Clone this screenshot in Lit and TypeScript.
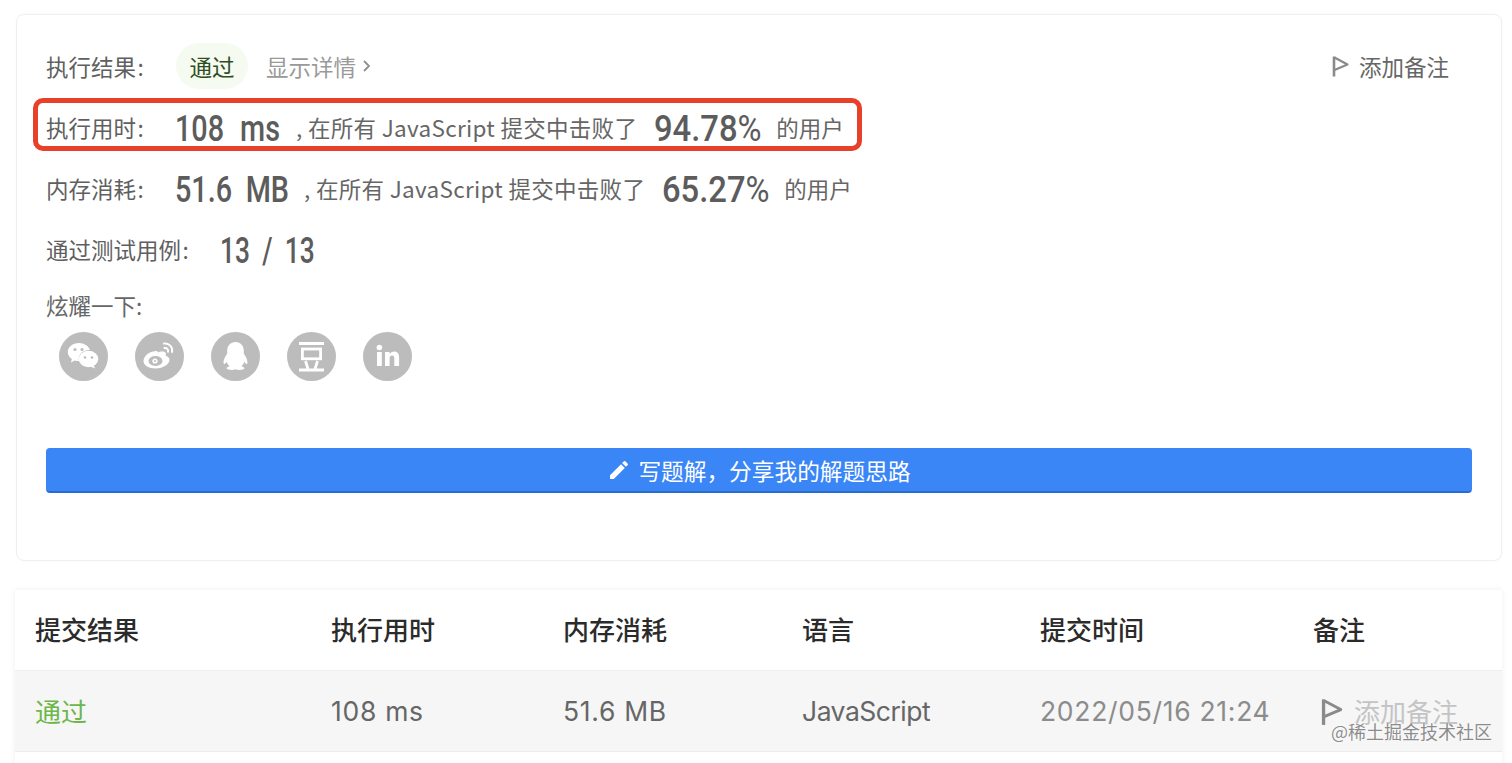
import { LitElement, html, css, svg } from "lit";
import { customElement } from "lit/decorators.js";

const flag = (cls: string) => html`<svg class=${cls} viewBox="0 0 18 22" fill="none"><path d="M2 1.5V21.5" stroke="currentColor" stroke-width="2.6"/><path d="M2.5 2.5L15.5 9.5L2.5 15" stroke="currentColor" stroke-width="2.2" stroke-linejoin="round"/></svg>`;

const wechat = svg`
  <path d="M20 11c-6.4 0-11.200 4-11.200 9.100 0 2.900 1.600 5.300 4.100 7l-1 3.300 3.800-2c1.300.4 2.800.6 4.300.6-.2-.8-.3-1.400-.3-2.100 0-5 4.600-8.900 10.500-8.900h.8C29.600 13.900 25.200 11 20 11z" fill="#fff"/>
  <ellipse cx="29.500" cy="27" rx="9.800" ry="8.200" fill="#fff"/>
  <path d="M34 33l2.500 3.500-5.500-2z" fill="#fff"/>
  <circle cx="16" cy="17.500" r="1.500" fill="#bcbcbc"/><circle cx="23" cy="17.500" r="1.500" fill="#bcbcbc"/>
  <circle cx="26" cy="25.500" r="1.300" fill="#bcbcbc"/><circle cx="33" cy="25.500" r="1.300" fill="#bcbcbc"/>`;
const weibo = svg`
  <path d="M21 19c-7 .6-12.500 5-12.500 10 0 4.500 5.300 7.400 12 7.400 7.800 0 14-4 14-8.600 0-2.800-3-3.800-4-4.100 1-2.400.4-4.200-3.100-4.300-1.900-.1-3.800.6-4.400 1-.5-1.500-1.200-1.500-2-1.400z" fill="#fff"/>
  <ellipse cx="20.500" cy="29" rx="7" ry="5" fill="#bcbcbc"/>
  <circle cx="20" cy="29" r="2.600" fill="#fff"/><circle cx="20" cy="29" r="1" fill="#bcbcbc"/>
  <path d="M29 11.500c5-.8 9 3.500 8 8.500M29.500 16c2.400-.4 4 1.500 3.500 3.800" stroke="#fff" stroke-width="2" fill="none" stroke-linecap="round"/>`;
const qq = svg`
  <path d="M24.500 10c-5 0-8.300 3.700-8.300 8.500v3.200c-2 2.600-4.300 7-3.500 9.800.6 1.400 2.200-.3 3-1.700.6 1.800 1.500 3.300 2.800 4.400-1.700.5-2.900 1.300-2.900 2.100 0 1 3 1.700 5.500 1.700 1.400 0 2.500-.3 3.400-.8.900.5 2 .8 3.400.8 2.500 0 5.500-.7 5.500-1.700 0-.8-1.200-1.600-2.900-2.100 1.300-1.100 2.200-2.600 2.800-4.400.8 1.400 2.400 3.100 3 1.700.8-2.800-1.500-7.200-3.500-9.800v-3.200c0-4.800-3.300-8.500-8.300-8.500z" fill="#fff"/>`;
const douban = svg`
  <path d="M12 11.500h25M12 38h25" stroke="#fff" stroke-width="2.800"/>
  <rect x="15.400" y="17" width="18.200" height="9.800" fill="none" stroke="#fff" stroke-width="2.800"/>
  <path d="M18.500 29l2.500 8M30.500 29l-2.500 8" stroke="#fff" stroke-width="2.800"/>`;
const linkedin = svg`
  <rect x="14" y="20" width="4.800" height="14" fill="#fff"/><circle cx="16.400" cy="15.500" r="2.800" fill="#fff"/>
  <path d="M22 20h4.600v2c1-1.500 2.500-2.400 4.500-2.400 3.600 0 5 2.300 5 6V34h-4.800v-7.500c0-2-.6-3.100-2.200-3.100-1.700 0-2.500 1.200-2.500 3.100V34H22z" fill="#fff"/>`;

@customElement("app-root")
export class AppRoot extends LitElement {
  static styles = css`
    :host {
      display: block;
      width: 1512px;
      height: 763px;
      overflow: hidden;
      position: relative;
      background: #fff;
      font-family: "Noto Sans CJK SC", "Noto Sans", sans-serif;
      color: #666;
      font-size: 22.5px;
    }
    .card {
      margin: 14px 10px 0 16px;
      border: 1px solid #efefef;
      border-radius: 8px;
      padding: 22px 29px 67px;
      box-shadow: 0 0 3px rgba(0, 0, 0, 0.03);
    }
    .row {
      display: flex;
      align-items: center;
      box-sizing: border-box;
      height: 61px;
      padding-bottom: 4px;
      white-space: nowrap;
      position: relative;
    }
    .label { width: 129px; flex: none; color: #5f5f5f; }
    .label.wide { width: 174px; }
    .pill {
      width: 72px;
      height: 46px;
      margin-left: 1px;
      border-radius: 23px;
      background: #f6fbf2;
      color: #2f4f1e;
      display: flex;
      align-items: center;
      justify-content: center;
    }
    .details { margin-left: 18px; color: #9a9a9a; display: flex; align-items: center; gap: 6px; }
    .chev { width: 9px; height: 14px; }
    .note { margin-left: auto; margin-right: 23px; display: flex; align-items: center; gap: 9px; color: #666; }
    .note svg { width: 18px; height: 22px; color: #8a8a8a; }
    .big {
      display: inline-block;
      flex: none;
      margin-top: 4px;
      font-family: "Roboto", sans-serif;
      font-size: 36px;
      line-height: 40px;
      font-weight: 500;
      color: #5c5c5c;
      white-space: nowrap;
      transform-origin: left center;
      transform: scaleX(0.8);
      word-spacing: 3px;
    }
    .w108 { width: 105px; word-spacing: 11px; }
    .w516 { width: 113px; word-spacing: 8px; }
    .w13 { width: 93px; word-spacing: 8px; transform: scaleX(0.73); }
    .wpct { width: 106px; transform: scaleX(0.91); }
    .txt { font-size: 22.5px; margin-left: 16px; color: #666; letter-spacing: 0.3px; }
    .pct { margin-left: 17px; }
    .pct i { font-style: normal; font-weight: 400; }
    .end { font-size: 22.5px; margin-left: 16px; color: #666; }
    .redbox {
      position: absolute;
      left: -13px;
      top: 0;
      width: 829px;
      height: 53px;
      box-sizing: border-box;
      border: 5px solid #e8412b;
      border-radius: 10px;
    }
    .share { height: 52px; }
    .icons { display: flex; gap: 27px; padding-left: 13px; margin-top: -1px; }
    .icons svg { width: 49px; height: 49px; display: block; }
    .btn {
      margin-top: 67px;
      height: 45px;
      box-sizing: border-box;
      background: #3b86f6;
      border: 1px solid #3b86f6;
      border-bottom: 2px solid #2a6ccc;
      border-radius: 4px;
      display: flex;
      align-items: center;
      justify-content: center;
      gap: 7px;
      color: #fff;
      font-size: 22.7px;
    }
    .btn svg { width: 24px; height: 24px; }
    .table {
      position: relative;
      margin: 29px 10px 0 15px;
      box-shadow: 0 0 6px rgba(0, 0, 0, 0.07);
    }
    .tr {
      display: grid;
      grid-template-columns: 296px 232px 239px 238px 273px 1fr;
      padding-left: 20px;
      box-sizing: border-box;
      height: 81px;
      align-items: center;
      white-space: nowrap;
      font-size: 26px;
    }
    .head { font-weight: 500; color: #2b2b2b; height: 81px; padding-bottom: 4px; border-bottom: 1px solid #eee; }
    .body { background: #f6f6f6; color: #666; border-bottom: 1px solid #ececec; }
    .cjk { margin-top: -2px; }
    .num { font-family: "Inter", sans-serif; font-size: 26.5px; letter-spacing: 0.7px; }
    .num.lang { letter-spacing: -0.5px; }
    .pass { color: #6cb64a; }
    .time { color: #8c8c8c; }
    .add { display: flex; align-items: center; gap: 10px; padding-left: 8px; color: #c4c4c4; margin-top: -2px; }
    .add svg { width: 23px; height: 29px; color: #8a8a8a; margin-top: 2px; }
    .filler { height: 30px; background: #fff; }
    .mark {
      position: absolute;
      right: 20px;
      bottom: 19px;
      font-size: 18px;
      color: rgba(120, 120, 120, 0.85);
      text-shadow: 0 0 2px rgba(255, 255, 255, 0.6);
      white-space: nowrap;
    }
  `;

  render() {
    return html`
      <div class="card">
        <div class="row">
          <span class="label">执行结果\u200a:</span>
          <span class="pill">通过</span>
          <span class="details">显示详情
            <svg class="chev" viewBox="0 0 9 14" fill="none"><path d="M2 2l5 5-5 5" stroke="#8f8f8f" stroke-width="1.800"/></svg>
          </span>
          <span class="note">${flag("")}添加备注</span>
        </div>
        <div class="row">
          <span class="label">执行用时\u200a:</span>
          <span class="big w108">108 ms</span>
          <span class="txt">, 在所有 JavaScript 提交中击败了</span>
          <span class="big wpct pct">94.78<i>%</i></span>
          <span class="end">的用户</span>
          <div class="redbox"></div>
        </div>
        <div class="row">
          <span class="label">内存消耗\u200a:</span>
          <span class="big w516">51.6 MB</span>
          <span class="txt">, 在所有 JavaScript 提交中击败了</span>
          <span class="big wpct pct">65.27<i>%</i></span>
          <span class="end">的用户</span>
        </div>
        <div class="row">
          <span class="label wide">通过测试用例\u200a:</span>
          <span class="big w13">13 / 13</span>
        </div>
        <div class="row share"><span>炫耀一下:</span></div>
        <div class="icons">
          ${[wechat, weibo, qq, douban, linkedin].map(
            (i) => html`<svg viewBox="0 0 49 49"><circle cx="24.5" cy="24.5" r="24.5" fill="#bcbcbc"/>${i}</svg>`
          )}
        </div>
        <div class="btn">
          <svg viewBox="0 0 24 24"><path fill="#fff" d="M3 17.250V21h3.750L17.810 9.940l-3.750-3.750L3 17.250zM20.710 7.040a1 1 0 0 0 0-1.410l-2.340-2.340a1 1 0 0 0-1.410 0l-1.830 1.830 3.750 3.750 1.830-1.830z"/></svg>
          <span>写题解，分享我的解题思路</span>
        </div>
      </div>
      <div class="table">
        <div class="tr head">
          <span>提交结果</span><span>执行用时</span><span>内存消耗</span><span>语言</span><span>提交时间</span><span>备注</span>
        </div>
        <div class="tr body">
          <span class="pass cjk">通过</span>
          <span class="num">108 ms</span>
          <span class="num">51.6 MB</span>
          <span class="num lang">JavaScript</span>
          <span class="num time">2022/05/16 21:24</span>
          <span class="add">${flag("")}添加备注</span>
        </div>
        <div class="filler"></div>
      </div>
      <div class="mark">@稀土掘金技术社区</div>
    `;
  }
}
